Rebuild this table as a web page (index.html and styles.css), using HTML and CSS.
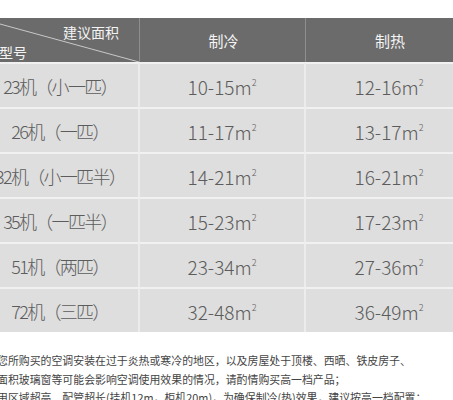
FILE: index.html
```html
<!DOCTYPE html>
<html lang="zh">
<head>
<meta charset="utf-8">
<link rel="stylesheet" href="styles.css">
</head>
<body>
<div class="page">
  <div class="grid">
    <div class="hcell corner">
      <svg class="diag" viewBox="0 0 100 100" preserveAspectRatio="none"><line x1="0" y1="0" x2="100" y2="100" stroke="#c8c8c8" stroke-width="1" vector-effect="non-scaling-stroke"/></svg>
      <span class="area">建议面积</span>
      <span class="model">型号</span>
    </div>
    <div class="hcell">制冷</div>
    <div class="hcell last">制热</div>

    <div class="cell first">23机（小一匹）</div><div class="cell">10-15m<sup>2</sup></div><div class="cell last">12-16m<sup>2</sup></div>
    <div class="cell first">26机（一匹）</div><div class="cell">11-17m<sup>2</sup></div><div class="cell last">13-17m<sup>2</sup></div>
    <div class="cell first">32机（小一匹半）</div><div class="cell">14-21m<sup>2</sup></div><div class="cell last">16-21m<sup>2</sup></div>
    <div class="cell first">35机（一匹半）</div><div class="cell">15-23m<sup>2</sup></div><div class="cell last">17-23m<sup>2</sup></div>
    <div class="cell first">51机（两匹）</div><div class="cell">23-34m<sup>2</sup></div><div class="cell last">27-36m<sup>2</sup></div>
    <div class="cell first">72机（三匹）</div><div class="cell">32-48m<sup>2</sup></div><div class="cell last">36-49m<sup>2</sup></div>
  </div>
  <div class="notes">
    <p>您所购买的空调安装在过于炎热或寒冷的地区，以及房屋处于顶楼、西晒、铁皮房子、</p>
    <p>面积玻璃窗等可能会影响空调使用效果的情况，请酌情购买高一档产品；</p>
    <p>用区域超高、配管超长(挂机12m，柜机20m)，为确保制冷(热)效果，建议按高一档配置；</p>
  </div>
</div>
</body>
</html>
```

FILE: styles.css
```css
html, body {
  margin: 0;
  padding: 0;
  background: #ffffff;
}
.page {
  width: 453px;
  height: 400px;
  overflow: hidden;
  font-family: "Noto Sans CJK SC", "Noto Sans", sans-serif;
}
.grid {
  display: grid;
  grid-template-columns: 162px 166px 166px;
  grid-template-rows: 44px repeat(6, 45px);
  width: 494px;
  margin: 18px 0 0 -22px;
  background: #f1f1f1;
}
.hcell {
  position: relative;
  background: #6b6b6b;
  color: #f4f4f4;
  font-size: 15px;
  display: flex;
  align-items: center;
  justify-content: center;
  border-right: 1px solid #8e8e8e;
  padding-left: 2px;
}
.hcell.last { border-right: none; }
.corner {
  display: block;
  font-size: 14px;
}
.diag {
  position: absolute;
  left: 0;
  top: 0;
  width: 100%;
  height: 100%;
}
.area {
  position: absolute;
  right: 20px;
  top: 4px;
  line-height: 20px;
}
.model {
  position: absolute;
  left: 21px;
  top: 24px;
  line-height: 20px;
}
.cell {
  background: #dedede;
  color: #5c5c5c;
  font-size: 19px;
  font-weight: 300;
  display: flex;
  align-items: center;
  justify-content: center;
  border-top: 2px solid #f1f1f1;
  border-right: 2px solid #ececec;
  box-sizing: border-box;
  padding-top: 1px;
}
.cell.first {
  font-size: 18px;
  letter-spacing: -1.7px;
  padding-left: 4px;
}
.cell.last { border-right: none; }
.cell sup {
  font-size: 9px;
  line-height: 0;
  position: relative;
  top: -3px;
}
.notes {
  margin: 19px 0 0 -3px;
  font-size: 10.9px;
  line-height: 18.5px;
  color: #444444;
  white-space: nowrap;
}
.notes p { margin: 0; }
```
